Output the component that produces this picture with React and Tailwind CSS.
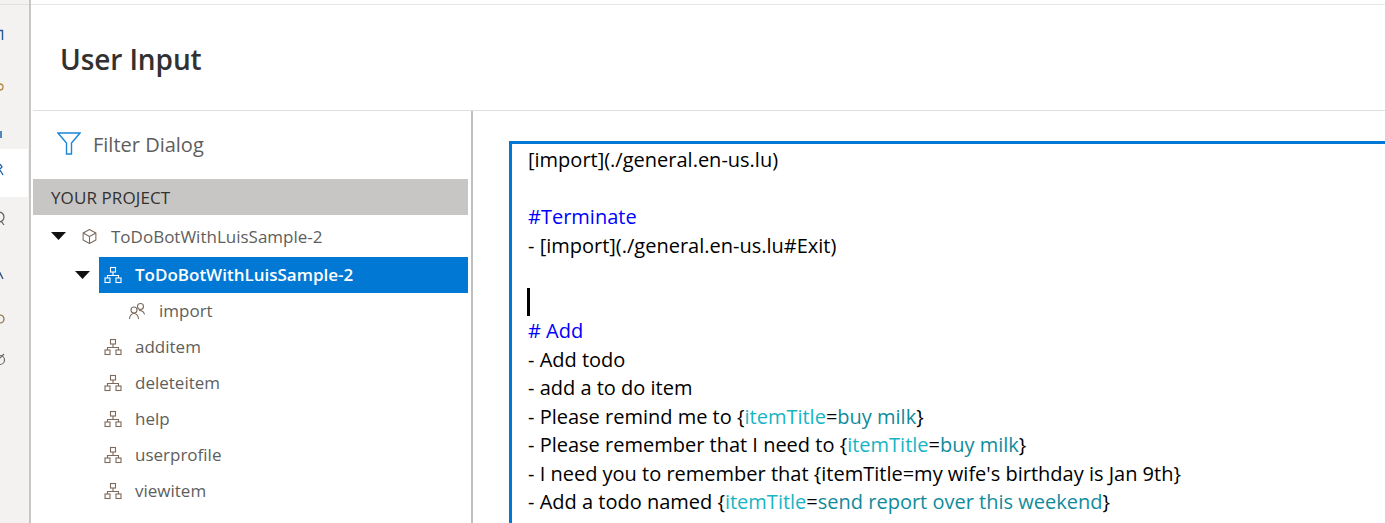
import React from "react";

const F = { fontFamily: '"Open Sans", "Noto Sans", sans-serif' };

function Flow({ className = "" }) {
  return (
    <svg className={className} width="18" height="18" viewBox="0 0 18 18" fill="none" strokeWidth="1.1" stroke="currentColor">
      <rect x="6.5" y="1.5" width="5" height="4.5" />
      <path d="M9 6v3.5M3.5 12V9.5h11V12" />
      <rect x="1" y="12" width="5" height="4.5" />
      <rect x="12" y="12" width="5" height="4.5" />
    </svg>
  );
}

function Caret({ className = "" }) {
  return (
    <svg className={className} width="15" height="8" viewBox="0 0 15 8">
      <path d="M0 0h15L7.5 8z" fill="#111" />
    </svg>
  );
}

function Row({ name }) {
  return (
    <div className="flex h-9 shrink-0 items-center pl-[73px] text-[#605e5c]">
      <Flow className="text-[#7d6a5c]" />
      <span className="ml-[13px] text-[17px]">{name}</span>
    </div>
  );
}

function Title({ children }) {
  return <span className="text-[#17b5c4]">{children}</span>;
}
function Val({ children }) {
  return <span className="text-[#0f8b9b]">{children}</span>;
}

function Line({ children, className = "" }) {
  return <div className={"h-[28.5px] whitespace-pre " + className}>{children || " "}</div>;
}

function Rail() {
  return (
    <div className="flex h-full w-[31px] shrink-0 flex-col border-r-2 border-[#c8c6c4] bg-[#f3f2f1]">
      <div className="mt-1 h-px shrink-0 bg-[#e1dfdd]"></div>
      <svg className="mt-[23px] block" width="4" height="13" viewBox="0 0 4 13" fill="none" stroke="#2b579a" strokeWidth="1.4">
        <path d="M-2 2.5h5M2.5 2v10" />
      </svg>
      <svg className="mt-[41px] block" width="4" height="10" viewBox="0 0 4 10" fill="none" stroke="#b8863b" strokeWidth="1.3">
        <circle cx="0" cy="5" r="3" />
      </svg>
      <svg className="mt-[39px] block" width="3" height="7" viewBox="0 0 3 7" fill="none" stroke="#2b6cb0" strokeWidth="1.6">
        <path d="M1 0v7" />
      </svg>
      <div className="mt-[11px] h-[48px] w-[28px] bg-white">
        <svg className="mt-[14px] block" width="4" height="13" viewBox="0 0 4 13" fill="none" stroke="#1f5fa8" strokeWidth="1.3">
          <path d="M0 1l2 3-2 2M0 7l3 5" />
        </svg>
      </div>
      <svg className="mt-[13px] block" width="5" height="17" viewBox="0 0 5 17" fill="none" stroke="#605e5c" strokeWidth="1.2">
        <circle cx="-1" cy="7" r="5" />
        <path d="M1 11l3 4" />
      </svg>
      <svg className="mt-[44px] block" width="4" height="8" viewBox="0 0 4 8" fill="none" stroke="#2b4f81" strokeWidth="1.3">
        <path d="M-1 0l4 8" />
      </svg>
      <svg className="mt-[35px] block" width="5" height="10" viewBox="0 0 5 10" fill="none" stroke="#8a6a3a" strokeWidth="1.2">
        <circle cx="0" cy="5" r="4" />
      </svg>
      <svg className="mt-[29px] block" width="5" height="13" viewBox="0 0 5 13" fill="none" stroke="#6b6a69" strokeWidth="1.2">
        <circle cx="0" cy="7" r="4.5" />
        <path d="M0 5l4-4" />
      </svg>
    </div>
  );
}

export default function App() {
  return (
    <div className="flex h-[523px] w-[1385px] overflow-hidden bg-white" style={F}>
      <Rail />
      <div className="flex min-w-0 flex-1 flex-col">
        <div className="mt-1 h-px shrink-0 bg-[#e6e6e6]"></div>
        <div className="flex h-[105px] shrink-0 items-center pl-[29px] pt-[2px]">
          <h1 className="text-[28px] font-semibold tracking-[-0.1px] text-[#323130]">User Input</h1>
        </div>
        <div className="ml-[2px] h-px shrink-0 bg-[#e1dfdd]"></div>
        <div className="flex min-h-0 flex-1">
          <div className="flex w-[442px] shrink-0 flex-col border-r-2 border-[#bfbfbf]">
            <div className="flex h-[68px] shrink-0 items-center pl-[26px]">
              <svg className="-mt-[3px]" width="24" height="23" viewBox="0 0 24 23" fill="none" stroke="#1a86d8" strokeWidth="1.4">
                <path d="M1 1h22l-8.500 10v11h-5V11z" />
              </svg>
              <span className="ml-[12px] text-[20px] text-[#605e5c]">Filter Dialog</span>
            </div>
            <div className="ml-[2px] mr-[3px] flex h-9 shrink-0 items-center bg-[#c8c6c4] pl-[18px] pt-[2px] text-[17px] tracking-[0.1px] text-[#323130]">
              YOUR PROJECT
            </div>
            <div className="ml-[2px] flex h-[42px] shrink-0 items-center pl-[18px] pt-[2px] text-[#605e5c]">
              <Caret className="-mt-[2px]" />
              <svg className="ml-[15px] -mt-[2px]" width="17" height="17" viewBox="0 0 24 24" fill="none" stroke="#7d6a5c" strokeWidth="1.5" strokeLinejoin="round">
                <path d="M12 2l9 5v10l-9 5-9-5V7z" />
                <path d="M3 7l9 5 9-5M12 12v10" />
              </svg>
              <span className="ml-[13px] text-[17px]">ToDoBotWithLuisSample-2</span>
            </div>
            <div className="ml-[2px] mr-[3px] flex h-9 shrink-0 items-center">
              <Caret className="ml-[42px]" />
              <div className="ml-[9px] flex h-9 flex-1 items-center bg-[#0078d4] pl-[5px] text-white">
                <Flow />
                <span className="ml-[13px] text-[17px] font-semibold">ToDoBotWithLuisSample-2</span>
              </div>
            </div>
            <div className="flex h-9 shrink-0 items-center pl-[97px] text-[#605e5c]">
              <svg width="18" height="18" viewBox="0 0 18 18" fill="none" stroke="#7d6a5c" strokeWidth="1.1">
                <circle cx="12.500" cy="4.500" r="3" />
                <circle cx="6" cy="8" r="3" />
                <path d="M1.500 17c0-3 2-5.500 4.500-5.500S10.500 14 10.500 17M11 8.500c2.500 0 5 1.500 5.500 4" />
              </svg>
              <span className="ml-[13px] text-[17px]">import</span>
            </div>
            <Row name="additem" />
            <Row name="deleteitem" />
            <Row name="help" />
            <Row name="userprofile" />
            <Row name="viewitem" />
          </div>
          <div className="min-w-0 flex-1 overflow-hidden pl-[36px] pt-[30px]">
            <div className="h-[500px] w-[1000px] border-l-[3px] border-t-[3px] border-[#0078d4] pl-[16px] pt-[2px] text-[20px] leading-[28.5px] text-black">
              <Line>[import](./general.en-us.lu)</Line>
              <Line />
              <Line className="text-[#0000ff]">#Terminate</Line>
              <Line>- [import](./general.en-us.lu#Exit)</Line>
              <Line />
              <div className="-ml-px -mt-px mb-px h-[28.5px]"><div className="h-[28px] w-[3px] bg-black"></div></div>
              <Line className="text-[#0000ff]"># Add</Line>
              <Line>- Add todo</Line>
              <Line>- add a to do item</Line>
              <Line>- Please remind me to {"{"}<Title>itemTitle</Title>=<Val>buy milk</Val>{"}"}</Line>
              <Line>- Please remember that I need to {"{"}<Title>itemTitle</Title>=<Val>buy milk</Val>{"}"}</Line>
              <Line>- I need you to remember that {"{"}itemTitle=my wife's birthday is Jan 9th{"}"}</Line>
              <Line>- Add a todo named {"{"}<Title>itemTitle</Title>=<Val>send report over this weekend</Val>{"}"}</Line>
              <Line>- add {"{"}<Title>itemTitle</Title>=<Val>call my mom</Val>{"}"} to my todo list</Line>
            </div>
          </div>
        </div>
      </div>
    </div>
  );
}
